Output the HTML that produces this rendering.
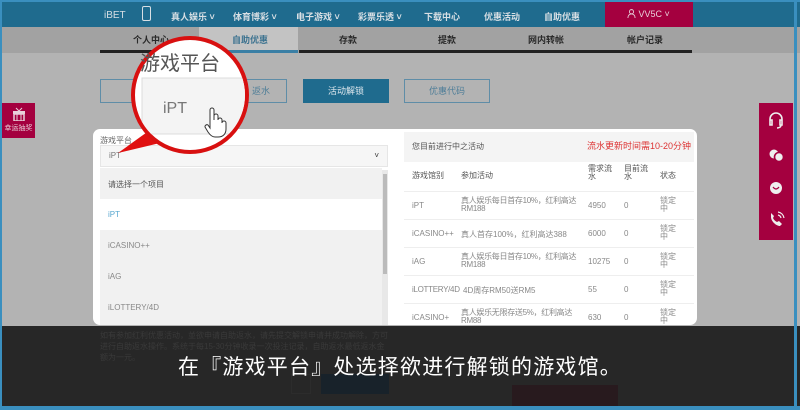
<!DOCTYPE html><html><head><meta charset="utf-8"><style>
*{margin:0;padding:0;box-sizing:border-box}
body{width:800px;height:410px;overflow:hidden;background:#b3b3b3;font-family:"Liberation Sans","Noto Sans CJK SC",sans-serif;position:relative}
.a{position:absolute}
.nav{left:0;top:0;width:800px;height:27px;background:#1f6b8e;border-top:2px solid #3a8fbf}
.nav span{position:absolute;top:8px;color:#d8dfe4;font-size:9px;font-weight:bold}
.sub{left:0;top:27px;width:800px;height:26px;background:#a2a2a2}
.sub span{position:absolute;top:6px;font-size:9px;font-weight:bold;color:#2a2a2a}
.tab{position:absolute;top:50px;height:3px;background:#222}
.btn{position:absolute;top:79px;height:24px;width:86px;border:1px solid #5f8da7;color:#4f7e98;font-size:9px;text-align:center;line-height:22px}
.t{position:absolute;font-size:8px;color:#888}
</style></head><body>
<div class="a" style="left:0;top:0;width:2px;height:410px;background:#3a8fbf;z-index:9"></div>
<div class="a" style="right:3px;top:0;width:3px;height:410px;background:#3a8fbf;z-index:9"></div>
<div class="a nav">
<span style="left:104px;font-weight:normal;font-size:10px">iBET</span>
<span style="left:142px;top:4px;width:9px;height:15px;border:1.5px solid #d8dfe4;border-radius:2px"></span>
<span style="left:171px">真人娱乐 ˅</span><span style="left:233px">体育博彩 ˅</span><span style="left:296px">电子游戏 ˅</span><span style="left:358px">彩票乐透 ˅</span>
<span style="left:424px">下载中心</span><span style="left:484px">优惠活动</span><span style="left:544px">自助优惠</span>
</div>
<div class="a" style="left:605px;top:2px;width:88px;height:25px;background:#a4003f;color:#e8d0da;font-size:9px;padding:7px 0 0 22px">
<svg width="9" height="9" style="vertical-align:-1px" viewBox="0 0 10 10"><circle cx="5" cy="3" r="2.3" fill="none" stroke="#e8d0da"/><path d="M1 10c0-3 2-4.5 4-4.5s4 1.5 4 4.5" fill="none" stroke="#e8d0da"/></svg> VV5C ˅</div>
<div class="a sub">
<div class="a" style="left:199px;top:0;width:99px;height:26px;background:#c3c3c3"></div>
<span style="left:133px">个人中心</span><span style="left:232px;color:#3d7390">自助优惠</span><span style="left:339px">存款</span>
<span style="left:438px">提款</span><span style="left:528px">网内转帐</span><span style="left:627px">帐户记录</span>
</div>
<div class="tab" style="left:100px;width:98px"></div><div class="tab" style="left:199px;width:99px;background:#3a7fa5"></div><div class="tab" style="left:299px;width:393px"></div>
<div class="btn" style="left:100px"></div>
<div class="btn" style="left:201px;text-align:right;padding-right:16px">返水</div>
<div class="btn" style="left:303px;background:#1f6b8e;color:#dfe8ee;border-color:#1f6b8e">活动解锁</div>
<div class="btn" style="left:404px">优惠代码</div>
<div class="a" style="left:2px;top:103px;width:33px;height:35px;background:#a4003f;color:#e8d0da;font-size:7px;text-align:center;padding-top:4px">
<svg width="14" height="14" viewBox="0 0 14 14" style="display:block;margin:0 auto 2px"><rect x="1" y="4" width="12" height="3" fill="#e8d0da"/><rect x="2" y="7" width="10" height="7" fill="none" stroke="#e8d0da" stroke-width="1.5"/><path d="M5 4v10M9 4v10M4 1l3 3 3-3" stroke="#e8d0da" fill="none"/></svg>幸运抽奖</div>
<div class="a" style="left:759px;top:103px;width:34px;height:137px;background:#a4003f"></div>
<svg class="a" style="left:759px;top:103px" width="34" height="137" fill="none" stroke="#eee" stroke-width="1.6">
<path d="M11 20v-4a6 6 0 0112 0v4M11 17h2v5h-2zM21 17h2v5h-2zM22 22c0 2-2 3-4 3" />
<circle cx="15" cy="51" r="4.5" fill="#eee" stroke="none"/><circle cx="20" cy="54" r="4.5" fill="#eee" stroke="#a4003f"/>
<circle cx="17" cy="85" r="6" fill="#eee" stroke="none"/><path d="M14 84q3 4 6 0" stroke="#a4003f" stroke-width="1.2"/>
<path d="M12 114c0 4 5 9 9 9l2-2-3-3-2 1c-2-1-3-2-4-4l1-2-3-3z" fill="#eee" stroke="none"/><path d="M19 112a4 4 0 013 3M19 109a7 7 0 016 6" stroke-width="1.2"/>
</svg>
<div class="a" style="left:93px;top:129px;width:604px;height:196px;background:#fff;border-radius:7px"></div>
<div class="t" style="left:100px;top:135px;color:#666">游戏平台</div>
<div class="a" style="left:100px;top:145px;width:288px;height:22px;background:#f6f6f6;border:1px solid #e6e6e6;font-size:8px;color:#777;padding:5px 8px">iPT<span style="float:right;color:#333">˅</span></div>
<div class="a" style="left:100px;top:168px;width:282px;height:157px;background:#f1f1f1"></div>
<div class="a" style="left:100px;top:199px;width:282px;height:31px;background:#fff"></div>
<div class="a" style="left:382px;top:170px;width:6px;height:155px;background:#e8e8e8"></div>
<div class="a" style="left:383px;top:174px;width:4px;height:100px;background:#bbb"></div>
<div class="t" style="left:108px;top:179px;color:#555">请选择一个项目</div>
<div class="t" style="left:108px;top:210px;color:#5aa8d0">iPT</div>
<div class="t" style="left:108px;top:241px">iCASINO++</div>
<div class="t" style="left:108px;top:272px">iAG</div>
<div class="t" style="left:108px;top:303px">iLOTTERY/4D</div>
<div class="a" style="left:404px;top:132px;width:290px;height:30px;background:#f4f4f4"></div>
<div class="t" style="left:412px;top:141px;color:#555">您目前进行中之活动</div>
<div class="a" style="left:587px;top:139px;font-size:9px;color:#d33">流水更新时间需10-20分钟</div>
<div class="t" style="left:412px;top:170px;color:#555">游戏馆别</div><div class="t" style="left:461px;top:170px;color:#555">参加活动</div>
<div class="t" style="left:588px;top:165px;color:#555;line-height:8px;width:30px">需求流水</div><div class="t" style="left:624px;top:165px;color:#555;line-height:8px;width:28px">目前流水</div><div class="t" style="left:660px;top:170px;color:#555">状态</div>
<div class="a" style="left:404px;top:191px;width:290px;border-top:1px solid #eee"></div>
<div class="a" style="left:404px;top:219px;width:290px;border-top:1px solid #eee"></div>
<div class="a" style="left:404px;top:247px;width:290px;border-top:1px solid #eee"></div>
<div class="a" style="left:404px;top:275px;width:290px;border-top:1px solid #eee"></div>
<div class="a" style="left:404px;top:303px;width:290px;border-top:1px solid #eee"></div>
<div class="t" style="left:412px;top:201px">iPT</div><div class="t" style="left:461px;top:197px;line-height:8px;width:126px;letter-spacing:-0.3px">真人娱乐每日首存10%，红利高达RM188</div><div class="t" style="left:588px;top:201px">4950</div><div class="t" style="left:624px;top:201px">0</div><div class="t" style="left:660px;top:197px;line-height:8px">锁定<br>中</div>
<div class="t" style="left:412px;top:229px">iCASINO++</div><div class="t" style="left:461px;top:229px">真人首存100%，红利高达388</div><div class="t" style="left:588px;top:229px">6000</div><div class="t" style="left:624px;top:229px">0</div><div class="t" style="left:660px;top:225px;line-height:8px">锁定<br>中</div>
<div class="t" style="left:412px;top:257px">iAG</div><div class="t" style="left:461px;top:253px;line-height:8px;width:126px;letter-spacing:-0.3px">真人娱乐每日首存10%，红利高达RM188</div><div class="t" style="left:588px;top:257px">10275</div><div class="t" style="left:624px;top:257px">0</div><div class="t" style="left:660px;top:253px;line-height:8px">锁定<br>中</div>
<div class="t" style="left:412px;top:285px;letter-spacing:-0.3px">iLOTTERY/4D</div><div class="t" style="left:463px;top:285px">4D周存RM50送RM5</div><div class="t" style="left:588px;top:285px">55</div><div class="t" style="left:624px;top:285px">0</div><div class="t" style="left:660px;top:281px;line-height:8px">锁定<br>中</div>
<div class="t" style="left:412px;top:313px">iCASINO+</div><div class="t" style="left:461px;top:309px;line-height:8px;width:126px;letter-spacing:-0.3px">真人娱乐无限存送5%，红利高达RM88</div><div class="t" style="left:588px;top:313px">630</div><div class="t" style="left:624px;top:313px">0</div><div class="t" style="left:660px;top:309px;line-height:8px">锁定<br>中</div>
<svg class="a" style="left:0;top:0" width="800" height="410">
<polygon points="118,153 150,130 160,143" fill="#e01010"/>
<circle cx="190" cy="95" r="57" fill="#fff" stroke="#d81010" stroke-width="4"/>
<clipPath id="c"><circle cx="190" cy="95" r="55"/></clipPath>
<g clip-path="url(#c)"><rect x="142" y="78" width="110" height="56" fill="#f4f4f4" stroke="#ddd"/></g>
<text x="140" y="70" font-size="20" fill="#555" font-family="Noto Sans CJK SC,sans-serif">游戏平台</text>
<text x="163" y="113" font-size="16" fill="#777" font-family="Liberation Sans,sans-serif">iPT</text>
<path d="M210 118v-8a2 2 0 014 0v10v-4a2 2 0 014 0v4a2 2 0 014 0v3a2 2 0 014 0v6c0 5-3 8-8 8h-3c-3 0-5-2-7-5l-3-5a2 2 0 013-2l2 3z" fill="#fff" stroke="#333" stroke-width="1"/>
</svg>
<div class="a" style="left:0;top:326px;width:800px;height:84px;background:rgba(28,28,28,0.93)"></div>
<div class="a" style="left:100px;top:330px;font-size:8px;color:#3a3a3a;line-height:11px;width:290px">如有参加红利优惠活动，並欲申请自助返水，请先提交解锁申请并成功解除，方可进行自助返水操作。系统于每15-30分钟收录一次投注记录，自助返水最低返水金额为一元。</div>
<div class="a" style="left:291px;top:374px;width:20px;height:20px;border:1px solid #2c2c2c"></div>
<div class="a" style="left:321px;top:374px;width:68px;height:20px;background:#18222a"></div>
<div class="a" style="left:512px;top:385px;width:106px;height:25px;background:#281a1e"></div>
<div class="a" style="left:0;top:351px;width:800px;text-align:center;color:#fff;font-size:21px;font-family:'Noto Sans CJK SC',sans-serif;letter-spacing:1.2px">在『游戏平台』处选择欲进行解锁的游戏馆。</div>
<div class="a" style="left:0;top:406px;width:800px;height:4px;background:#3a8fbf"></div>
</body></html>
